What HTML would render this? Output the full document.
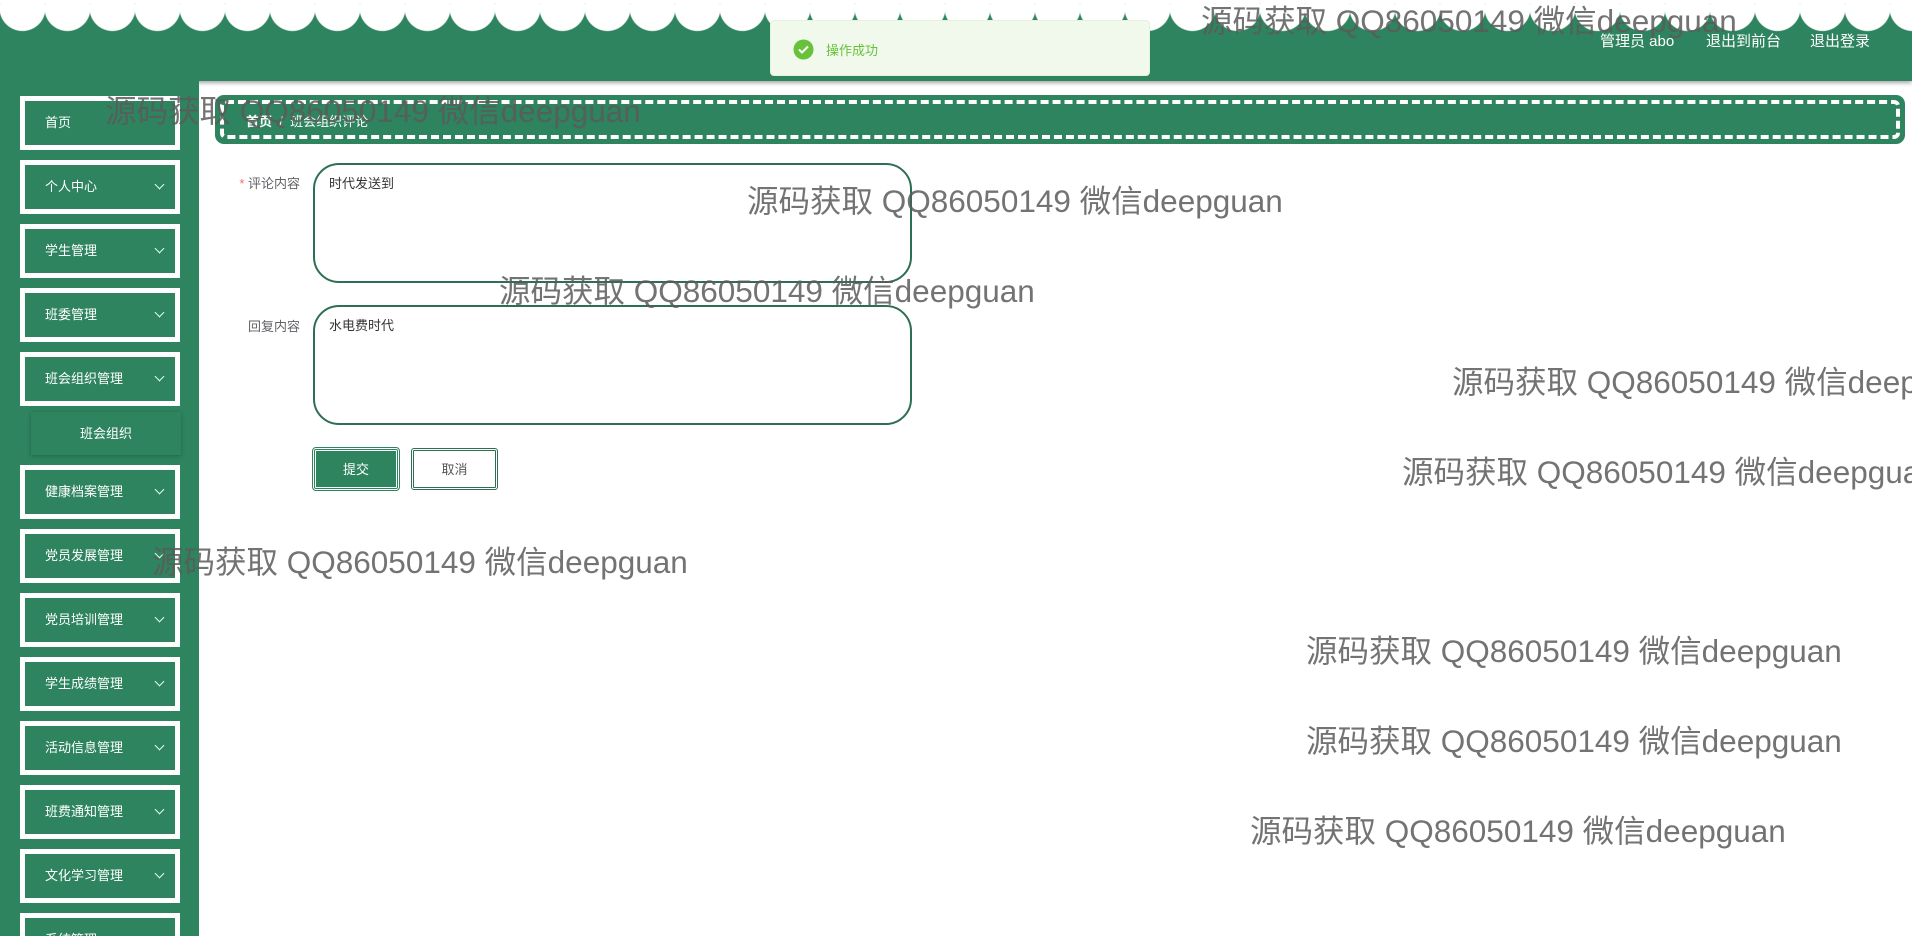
<!DOCTYPE html>
<html style="width:1912px;height:936px;overflow:hidden"><head><meta charset="utf-8"><style>
*{margin:0;padding:0;box-sizing:border-box}
body{width:1912px;height:936px;overflow:hidden;background:#fff;font-family:"Liberation Sans","Noto Sans CJK SC",sans-serif;position:relative}
.hd{position:absolute;left:0;top:0;width:1912px;height:81px;background:#2e845f;box-shadow:0 2px 4px rgba(0,0,0,.35)}
.sc{position:absolute;left:0;top:0;width:1912px;height:32px;background:radial-gradient(circle at 22.5px 8px,#fff 22.5px,transparent 23.5px) 0 0/45px 32px repeat-x}
.tl{position:absolute;left:0;top:0;width:1912px;height:3px;background:#fff}
.nav{position:absolute;top:30px;color:#fff;font-size:15px}
.sb{position:absolute;left:0;top:81px;width:199px;height:855px;background:#2e845f}
.it{position:absolute;left:20px;width:160px;height:54px;border:5px solid #fff;background:#2e845f;color:#fff;font-size:13px;line-height:44px;padding-left:20px}
.it i{position:absolute;right:12px;top:16px;width:7px;height:7px;border-right:1.3px solid #dfe;border-bottom:1.3px solid #dfe;transform:rotate(45deg)}
.sub{position:absolute;left:31px;top:412px;width:150px;height:43px;background:#2e845f;box-shadow:0 1px 4px rgba(0,0,0,.25);color:#fff;font-size:13px;text-align:center;line-height:43px}
.bc{position:absolute;left:215px;top:95px;width:1690px;height:49px;background:#2e845f;border-radius:9px}
.bc .d{position:absolute;left:5px;top:5px;right:5px;bottom:5px;border:4px dashed #fff;border-radius:6px}
.bc span{position:absolute;left:31px;top:16px;color:#fff;font-size:13px}
.lb{position:absolute;font-size:13px;color:#606266;text-align:right;width:100px}
.ta{position:absolute;left:313px;width:599px;height:120px;border:2px solid #2e6e52;border-radius:26px;font-size:13px;color:#333;padding:8px 14px}
.btn{position:absolute;top:448px;height:42px;font-size:13px;text-align:center;line-height:38px;border-radius:3px}
.wm{position:absolute;font-size:31.5px;color:rgba(90,90,90,.85);white-space:nowrap;line-height:36px}
.toast{position:absolute;left:770px;top:20px;width:380px;height:56px;background:#f0f9eb;border:1px solid #e1f3d8;border-radius:4px}
</style></head><body>
<div class="hd"><div class="sc"></div><div class="tl"></div>
<div class="nav" style="left:1600px">管理员 abo</div>
<div class="nav" style="left:1706px">退出到前台</div>
<div class="nav" style="left:1810px">退出登录</div>
</div>
<div class="toast"><svg style="position:absolute;left:22px;top:18px" width="21" height="21" viewBox="0 0 21 21"><circle cx="10.5" cy="10.5" r="10" fill="#67c23a"/><path d="M6 10.5l3 3 6-6" stroke="#fff" stroke-width="2" fill="none"/></svg><span style="position:absolute;left:55px;top:19px;font-size:13px;color:#67c23a">操作成功</span></div>
<div class="sb"></div>
<div class="it" style="top:96px">首页</div>
<div class="it" style="top:160px">个人中心<i></i></div>
<div class="it" style="top:224px">学生管理<i></i></div>
<div class="it" style="top:288px">班委管理<i></i></div>
<div class="it" style="top:352px">班会组织管理<i></i></div>
<div class="sub">班会组织</div>
<div class="it" style="top:465px">健康档案管理<i></i></div>
<div class="it" style="top:529px">党员发展管理<i></i></div>
<div class="it" style="top:593px">党员培训管理<i></i></div>
<div class="it" style="top:657px">学生成绩管理<i></i></div>
<div class="it" style="top:721px">活动信息管理<i></i></div>
<div class="it" style="top:785px">班费通知管理<i></i></div>
<div class="it" style="top:849px">文化学习管理<i></i></div>
<div class="it" style="top:913px">系统管理<i></i></div>
<div class="bc"><div class="d"></div><span><b>首页</b> &nbsp;/ &nbsp;班会组织评论</span></div>
<div class="lb" style="left:200px;top:173px"><span style="color:#f56c6c">*</span> 评论内容</div>
<div class="ta" style="top:163px">时代发送到</div>
<div class="lb" style="left:200px;top:316px">回复内容</div>
<div class="ta" style="top:305px">水电费时代</div>
<div class="btn" style="left:313px;width:86px;background:#2e845f;color:#fff;border:3px double #fff;outline:1px solid #2e845f">提交</div>
<div class="btn" style="left:411px;width:87px;background:#fff;color:#555;border:3px double #2e6e52">取消</div>
<div class="wm" style="left:1201px;top:3px">源码获取 QQ86050149 微信deepguan</div>
<div class="wm" style="left:105px;top:93px">源码获取 QQ86050149 微信deepguan</div>
<div class="wm" style="left:747px;top:183px">源码获取 QQ86050149 微信deepguan</div>
<div class="wm" style="left:499px;top:273px">源码获取 QQ86050149 微信deepguan</div>
<div class="wm" style="left:1452px;top:364px">源码获取 QQ86050149 微信deepguan</div>
<div class="wm" style="left:1402px;top:454px">源码获取 QQ86050149 微信deepguan</div>
<div class="wm" style="left:152px;top:544px">源码获取 QQ86050149 微信deepguan</div>
<div class="wm" style="left:1306px;top:633px">源码获取 QQ86050149 微信deepguan</div>
<div class="wm" style="left:1306px;top:723px">源码获取 QQ86050149 微信deepguan</div>
<div class="wm" style="left:1250px;top:813px">源码获取 QQ86050149 微信deepguan</div>
</body></html>
